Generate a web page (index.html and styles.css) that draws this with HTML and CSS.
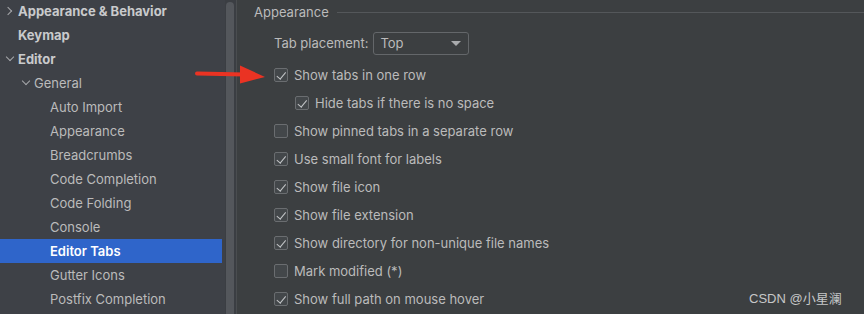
FILE: index.html
```html
<!DOCTYPE html>
<html>
<head>
<meta charset="utf-8">
<link rel="stylesheet" href="styles.css">
</head>
<body>
<div class="app">
  <nav class="sidebar">
    <div class="row top"><span class="chev right"></span><span class="lbl">Appearance &amp; Behavior</span></div>
    <div class="row top"><span class="chev none"></span><span class="lbl">Keymap</span></div>
    <div class="row top"><span class="chev down"></span><span class="lbl">Editor</span></div>
    <div class="row sub"><span class="chev down"></span><span class="lbl">General</span></div>
    <div class="row leaf">Auto Import</div>
    <div class="row leaf">Appearance</div>
    <div class="row leaf">Breadcrumbs</div>
    <div class="row leaf">Code Completion</div>
    <div class="row leaf">Code Folding</div>
    <div class="row leaf">Console</div>
    <div class="row leaf selected">Editor Tabs</div>
    <div class="row leaf">Gutter Icons</div>
    <div class="row leaf">Postfix Completion</div>
  </nav>
  <div class="scrollbar"><div class="thumb"></div></div>
  <div class="divider"></div>
  <main class="content">
    <div class="group-title"><span>Appearance</span><span class="rule"></span></div>
    <div class="placement">
      <span>Tab placement:</span>
      <div class="select"><span>Top</span><span class="caret"></span></div>
    </div>
    <div class="opts">
      <div class="opt"><span class="cb on"></span>Show tabs in one row</div>
      <div class="opt indent"><span class="cb on"></span>Hide tabs if there is no space</div>
      <div class="opt"><span class="cb"></span>Show pinned tabs in a separate row</div>
      <div class="opt"><span class="cb on"></span>Use small font for labels</div>
      <div class="opt"><span class="cb on"></span>Show file icon</div>
      <div class="opt"><span class="cb on"></span>Show file extension</div>
      <div class="opt"><span class="cb on"></span>Show directory for non-unique file names</div>
      <div class="opt"><span class="cb"></span>Mark modified (*)</div>
      <div class="opt"><span class="cb on"></span>Show full path on mouse hover</div>
    </div>
  </main>
</div>
<svg class="arrow" width="74" height="22" viewBox="0 0 74 22">
  <path d="M2 9.5 L50 10.5" stroke="#ea3323" stroke-width="4" stroke-linecap="round" fill="none"/>
  <path d="M45 1.5 L70 13 L45 19.5 Z" fill="#ea3323"/>
</svg>
<div class="watermark">CSDN @小星澜</div>
</body>
</html>
```
FILE: styles.css
```css
html, body {
  margin: 0;
  padding: 0;
  width: 864px;
  height: 314px;
  overflow: hidden;
  background: #3c3f41;
  font-family: Inter, "Noto Sans", "Noto Sans CJK SC", sans-serif;
  font-size: 13px;
  color: #bbbbbb;
}
.app {
  display: flex;
  height: 314px;
  overflow: hidden;
}
.sidebar {
  width: 225px;
  background: #3e4147;
  flex: none;
}
.row {
  height: 24px;
  display: flex;
  align-items: center;
  white-space: nowrap;
  margin-right: 3px;
}
.row:first-child {
  margin-top: -1px;
}
.row.top {
  font-weight: 700;
  color: #c9cacc;
  padding-left: 4px;
}
.row.sub {
  padding-left: 20px;
}
.row.leaf {
  padding-left: 50px;
}
.row.selected {
  background: #2f65ca;
  color: #ffffff;
  font-weight: 600;
}
.chev {
  width: 14px;
  height: 14px;
  flex: none;
  position: relative;
}
.chev.right::before,
.chev.down::before {
  content: "";
  position: absolute;
  width: 5px;
  height: 5px;
  border-right: 1.3px solid #a6a8ab;
  border-bottom: 1.3px solid #a6a8ab;
}
.chev.right::before {
  left: 1px;
  top: 4px;
  transform: rotate(-45deg);
}
.chev.down::before {
  left: 3px;
  top: 2px;
  transform: rotate(45deg);
}
.scrollbar {
  width: 11px;
  background: #3b3e43;
  flex: none;
  padding-top: 2px;
  box-sizing: border-box;
  overflow: hidden;
}
.thumb {
  margin-left: 1px;
  width: 8px;
  height: 330px;
  border-radius: 4px;
  background: #54575c;
}
.divider {
  width: 1px;
  background: #4a4d50;
  flex: none;
}
.content {
  flex: 1;
  background: #3c3f41;
  padding-left: 17px;
}
.group-title {
  display: flex;
  align-items: center;
  height: 24px;
}
.group-title .rule {
  flex: 1;
  height: 1px;
  background: #54575a;
  margin-left: 8px;
}
.placement {
  display: flex;
  align-items: center;
  height: 24px;
  margin-top: 7px;
  padding-left: 20px;
  gap: 5px;
}
.select {
  width: 96px;
  height: 23px;
  box-sizing: border-box;
  border: 1px solid #64676a;
  border-radius: 3px;
  display: flex;
  align-items: center;
  justify-content: space-between;
  padding: 0 7px 0 6px;
}
.caret {
  width: 0;
  height: 0;
  border-left: 5px solid transparent;
  border-right: 5px solid transparent;
  border-top: 5px solid #a9abad;
}
.opts {
  margin-top: 6px;
}
.opt {
  height: 28px;
  display: flex;
  align-items: center;
  padding-left: 20px;
  white-space: nowrap;
}
.opt.indent {
  padding-left: 41px;
}
.cb {
  width: 14px;
  height: 14px;
  box-sizing: border-box;
  border: 1px solid #6a6d70;
  border-radius: 2px;
  background: #43474a;
  margin-right: 6px;
  position: relative;
  flex: none;
}
.cb.on::after {
  content: "";
  position: absolute;
  left: 4px;
  top: 1px;
  width: 3.5px;
  height: 7.5px;
  border-right: 1.6px solid #c4c6c8;
  border-bottom: 1.6px solid #c4c6c8;
  transform: rotate(40deg);
}
.arrow {
  position: absolute;
  left: 195px;
  top: 64px;
}
.watermark {
  position: absolute;
  left: 749px;
  top: 288px;
  font-family: "Liberation Sans", "Noto Sans CJK SC", sans-serif;
  font-size: 13px;
  color: #c6c7c8;
}
```
